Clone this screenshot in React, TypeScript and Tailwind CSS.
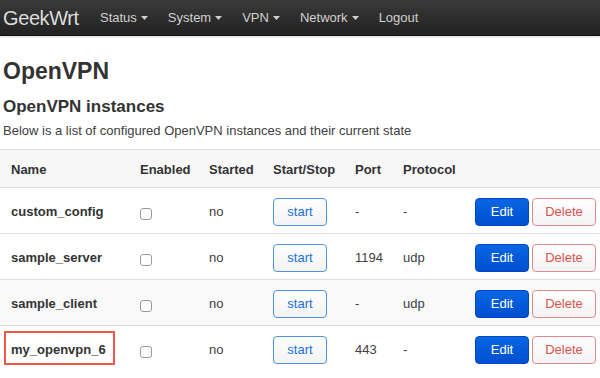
import React from 'react';

type Instance = {
  name: string;
  port: string;
  protocol: string;
  striped?: boolean;
  marked?: boolean;
};

const instances: Instance[] = [
  { name: 'custom_config', port: '-', protocol: '-' },
  { name: 'sample_server', port: '1194', protocol: 'udp' },
  { name: 'sample_client', port: '-', protocol: 'udp', striped: true },
  { name: 'my_openvpn_6', port: '443', protocol: '-', marked: true },
];

const navItems = ['Status', 'System', 'VPN', 'Network'];

const cols = 'grid grid-cols-[129px_69px_64px_82px_48px_72px_1fr] items-center';

function Caret() {
  return (
    <svg width="7" height="4" viewBox="0 0 7 4" className="ml-[4px] mt-[1px]">
      <path d="M0 0 L7 0 L3.5 4 Z" fill="currentColor" />
    </svg>
  );
}

function Navbar() {
  return (
    <div className="h-[36px] flex items-center bg-gradient-to-b from-[#3a3a3a] to-[#222] border-b border-[#111] shadow-[0_1px_2px_rgba(0,0,0,0.15)]">
      <div className="pl-[3px] text-[20px] tracking-[-0.4px] text-[#dcdcdc] font-light leading-none w-[100px]">
        GeekWrt
      </div>
      <div className="flex items-center gap-[20px] text-[13px] text-[#cfcfcf]">
        {navItems.map((item) => (
          <div key={item} className="flex items-center">
            <span>{item}</span>
            <Caret />
          </div>
        ))}
        <span>Logout</span>
      </div>
    </div>
  );
}

function Row({ inst }: { inst: Instance }) {
  return (
    <div
      className={`${cols} h-[46px] pt-[3px] border-t border-[#dedede] text-[13px] text-[#404040] ${
        inst.striped ? 'bg-[#f9f9f9]' : 'bg-white'
      }`}
    >
      <div className="relative pl-[11px] font-bold text-[#333]">
        {inst.name}
        {inst.marked && (
          <div className="absolute left-[4px] top-[-9px] w-[111px] h-[34px] border-2 border-[#f0564c]" />
        )}
      </div>
      <div className="pl-[11px] flex">
        <span className="w-[12px] h-[12px] mt-[3px] rounded-[3px] border border-[#9a9a9a] bg-white" />
      </div>
      <div className="pl-[11px]">no</div>
      <div className="pl-[11px]">
        <button className="w-[54px] h-[28px] rounded-[4px] border border-[#4d94e6] bg-gradient-to-b from-white to-[#f3f3f3] text-[#1b6fdc] text-[13px]">
          start
        </button>
      </div>
      <div className="pl-[11px]">{inst.port}</div>
      <div className="pl-[11px]">{inst.protocol}</div>
      <div className="pl-[11px] flex gap-[3px]">
        <button className="w-[54px] h-[28px] rounded-[4px] border border-[#0048c0] bg-gradient-to-b from-[#0a66e4] to-[#004fd0] text-white text-[13px] font-medium">
          Edit
        </button>
        <button className="w-[64px] h-[28px] rounded-[4px] border border-[#e08a8a] bg-gradient-to-b from-white to-[#f3f3f3] text-[#d9534f] text-[13px]">
          Delete
        </button>
      </div>
    </div>
  );
}

export default function App() {
  return (
    <div className="w-[600px] h-[378px] overflow-hidden bg-white font-['Liberation_Sans',Arial,sans-serif]">
      <Navbar />
      <div className="pl-[3px]">
        <h1 className="mt-[24px] text-[23px] leading-[23px] font-bold text-[#333]">OpenVPN</h1>
        <h2 className="mt-[15px] text-[17px] leading-[17px] font-bold text-[#333]">OpenVPN instances</h2>
        <p className="mt-[9px] text-[13px] leading-[13px] text-[#404040]">
          Below is a list of configured OpenVPN instances and their current state
        </p>
      </div>
      <div className="mt-[12px]">
        <div className={`${cols} h-[38px] pt-[2px] border-t border-[#dedede] bg-[#f7f7f7] text-[13px] font-bold text-[#333]`}>
          <div className="pl-[11px]">Name</div>
          <div className="pl-[11px]">Enabled</div>
          <div className="pl-[11px]">Started</div>
          <div className="pl-[11px]">Start/Stop</div>
          <div className="pl-[11px]">Port</div>
          <div className="pl-[11px]">Protocol</div>
          <div />
        </div>
        {instances.map((inst) => (
          <Row key={inst.name} inst={inst} />
        ))}
      </div>
    </div>
  );
}
